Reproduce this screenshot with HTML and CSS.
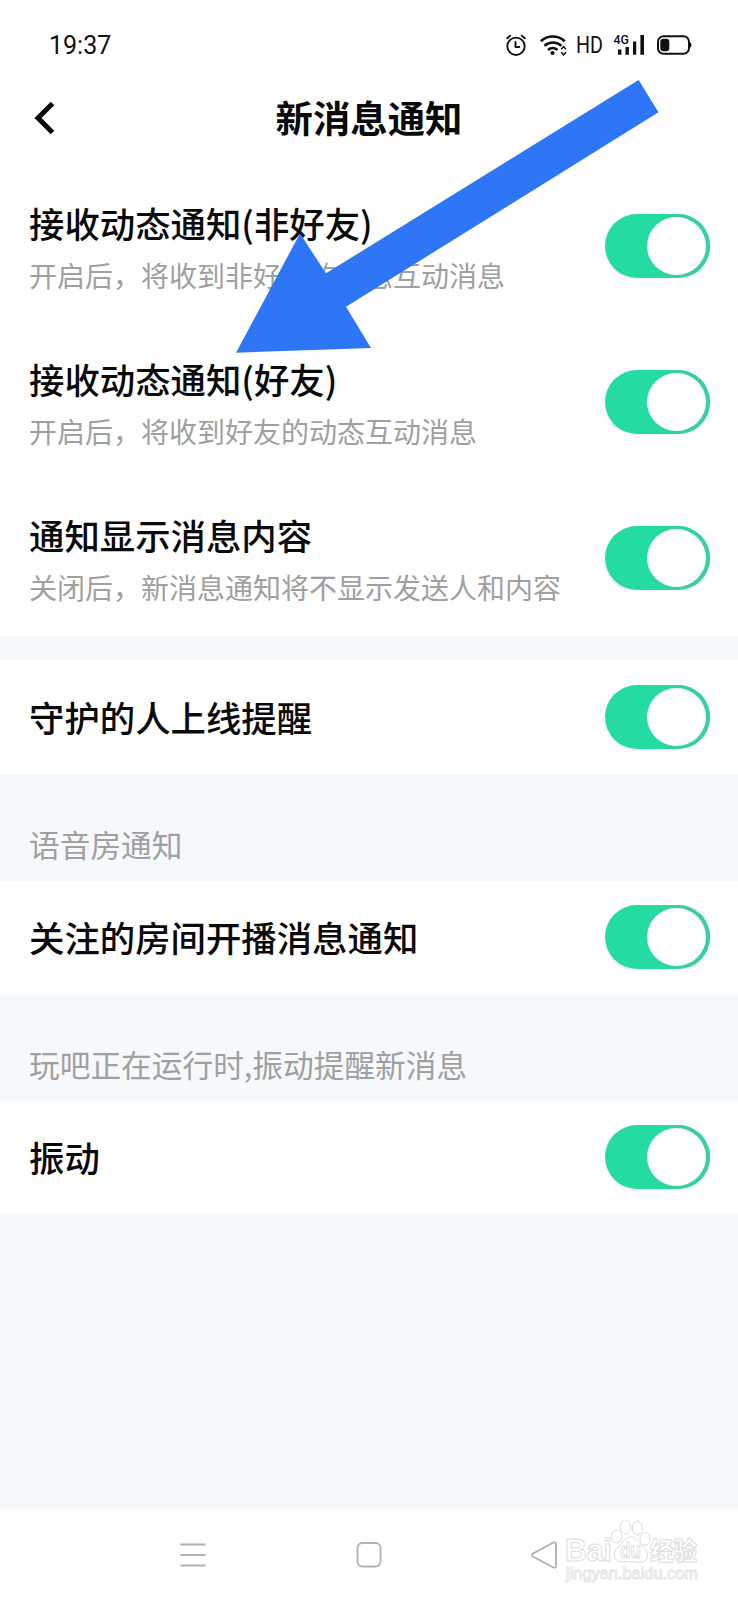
FILE: index.html
```html
<!DOCTYPE html>
<html lang="zh-CN">
<head>
    <meta charset="UTF-8">
    <meta name="viewport" content="width=device-width, initial-scale=1.0">
    <title>新消息通知</title>
    <link rel="stylesheet" href="styles.css">
</head>
<body>
    <div class="status-bar">
        <span class="time">19:37</span>
        <svg class="status-icons" width="190" height="26" viewBox="504 32 190 26">
            <!-- alarm -->
            <g fill="none" stroke="#111" stroke-width="1.9" stroke-linecap="round" stroke-linejoin="round">
                <circle cx="516" cy="46.3" r="8.7"/>
                <path d="M515.5 42v5h3.8M507.2 38.2l3-2.4M524.8 38.2l-3-2.4"/>
            </g>
            <!-- wifi -->
            <g fill="none" stroke="#111" stroke-width="2.5">
                <path d="M540.8 41.2c7-6.3 17-6.3 24 0M544.4 45.8c5-4.5 12-4.5 17 0M548 50c3-2.6 6.5-2.6 9.5 0"/>
            </g>
            <circle cx="552.5" cy="53" r="2.1" fill="#111"/>
            <path d="M561.2 49.2l2.4-2.6 2.4 2.6M561.2 52.2l2.4 2.6 2.4-2.6" fill="none" stroke="#111" stroke-width="1.5"/>
            <text class="hd" x="576" y="53.4" textLength="27" lengthAdjust="spacingAndGlyphs">HD</text>
            <!-- signal -->
            <text class="net" x="613.5" y="44.3" textLength="15.5" lengthAdjust="spacingAndGlyphs">4G</text>
            <path d="M618 49.5h3.4v5.3H618zM625.5 47h3.4v7.8h-3.4zM633 41.5h3.2v13.3H633zM640.4 35h3.6v19.8h-3.6z" fill="#111"/>
            <!-- battery -->
            <rect x="658" y="36.3" width="31" height="17.4" rx="5.5" fill="none" stroke="#111" stroke-width="2"/>
            <rect x="660.3" y="38.8" width="9" height="12.4" rx="3" fill="#111"/>
            <path d="M689.5 42q2 .5 2 3t-2 3z" fill="#111"/>
        </svg>
    </div>

    <div class="header">
        <svg class="back" width="22" height="34" viewBox="0 0 22 34">
            <path d="M19.500 2.500L5 17L19.500 31.500" fill="none" stroke="#0a0a0a" stroke-width="5"/>
        </svg>
        <h1>新消息通知</h1>
    </div>

    <div class="group">
        <div class="item tall">
            <div class="text">
                <p class="name">接收动态通知(非好友)</p>
                <p class="desc">开启后，将收到非好友的动态互动消息</p>
            </div>
            <div class="switch"><div class="knob"></div></div>
        </div>
        <div class="item tall">
            <div class="text">
                <p class="name">接收动态通知(好友)</p>
                <p class="desc">开启后，将收到好友的动态互动消息</p>
            </div>
            <div class="switch"><div class="knob"></div></div>
        </div>
        <div class="item tall">
            <div class="text">
                <p class="name">通知显示消息内容</p>
                <p class="desc">关闭后，新消息通知将不显示发送人和内容</p>
            </div>
            <div class="switch"><div class="knob"></div></div>
        </div>
    </div>

    <div class="group spaced">
        <div class="item">
            <p class="name">守护的人上线提醒</p>
            <div class="switch"><div class="knob"></div></div>
        </div>
    </div>

    <p class="section">语音房通知</p>
    <div class="group">
        <div class="item">
            <p class="name">关注的房间开播消息通知</p>
            <div class="switch"><div class="knob"></div></div>
        </div>
    </div>

    <p class="section">玩吧正在运行时,振动提醒新消息</p>
    <div class="group">
        <div class="item">
            <p class="name">振动</p>
            <div class="switch"><div class="knob"></div></div>
        </div>
    </div>

    <div class="nav">
        <svg width="28" height="30" viewBox="0 0 28 30">
            <path d="M1.500 4.500h25M1.500 15h25M1.500 25.500h25"/>
        </svg>
        <svg width="28" height="30" viewBox="0 0 28 30">
            <rect x="2.500" y="3" width="23" height="23.500" rx="5"/>
        </svg>
        <svg width="28" height="30" viewBox="0 0 28 30">
            <path d="M22.500 2.500L2 13.500q-2 1.500 0 3L22.500 27.500q2.500 .8 2.500-1.800V4.300q0-2.600-2.500-1.800z"/>
        </svg>
    </div>

    <!-- arrow over the list -->
    <svg class="arrow" width="430" height="280" viewBox="232 76 430 280">
        <path d="M236 352.700L300 233.500L326 273.300L638.600 80L658.500 112.300L346 306.700L371 348z" fill="#2e76f6"/>
    </svg>

    <svg class="watermark" width="146" height="76" viewBox="560 1516 146 76">
        <text class="logo" x="565" y="1561" textLength="47" lengthAdjust="spacingAndGlyphs">Bai</text>
        <g class="paw">
            <ellipse cx="616.500" cy="1536.500" rx="5.300" ry="6.300"/>
            <ellipse cx="625.500" cy="1527" rx="5.300" ry="6.800"/>
            <ellipse cx="637.500" cy="1528" rx="5.300" ry="6.800"/>
            <ellipse cx="645" cy="1539" rx="5" ry="6.300"/>
            <path d="M631 1537c-7 0-8 6-13 10-6 5-5 14 3 15 4 .5 6-.5 10-.5s7 1 11 .5c7-1 7-10 2-14-5-4-6-11-13-11z"/>
        </g>
        <text class="du" x="620" y="1558" textLength="21" lengthAdjust="spacingAndGlyphs">du</text>
        <text class="jy" x="650" y="1560" textLength="47" lengthAdjust="spacingAndGlyphs">经验</text>
        <text class="url" x="566" y="1579" textLength="132" lengthAdjust="spacingAndGlyphs">jingyan.baidu.com</text>
    </svg>
</body>
</html>
```
FILE: styles.css
```css
* {
    box-sizing: border-box;
}

body {
    position: relative;
    display: flex;
    flex-direction: column;
    height: 1600px;
    margin: 0;
    background-color: #f5f9fc;
    color: #0a0a0a;
    font-family: "Noto Sans CJK SC", sans-serif;
}

p, h1 {
    margin: 0;
}

.status-bar {
    display: flex;
    justify-content: space-between;
    align-items: center;
    height: 90px;
    padding: 0 44px 0 49px;
    background-color: #fff;
}

.time {
    font-family: Roboto, sans-serif;
    font-size: 25px;
    color: #111;
}

.hd {
    font: 23px Roboto, sans-serif;
    fill: #111;
}

.net {
    font: 500 13px Roboto, sans-serif;
    fill: #111;
}

.header {
    display: grid;
    grid-template-columns: 22px 1fr 22px;
    align-items: center;
    height: 78px;
    padding: 0 33px 23px;
    background-color: #fff;
}

.header h1 {
    font-size: 37.4px;
    font-weight: 700;
    line-height: 55px;
    text-align: center;
}

.group {
    background-color: #fff;
}

.group.spaced {
    margin-top: 24px;
}

.item {
    display: flex;
    justify-content: space-between;
    align-items: center;
    height: 113px;
    padding: 0 28px 1px 29px;
}

.item.tall {
    height: 156px;
    padding-bottom: 0;
}

.spaced .item {
    height: 114px;
    padding-bottom: 0;
}

.text {
    padding-top: 4px;
}

.name {
    font-size: 35.4px;
    font-weight: 500;
    line-height: 54px;
}

.desc {
    font-size: 28px;
    font-weight: 400;
    line-height: 50px;
    color: #a0a0a0;
}

/* Switch */
.switch {
    flex: none;
    width: 105px;
    height: 64px;
    padding: 3px 4px 3px 42px;
    border-radius: 32px;
    background-color: #24dba2;
    overflow: hidden;
}

.knob {
    width: 59px;
    height: 58px;
    border-radius: 50%;
    background-color: #fff;
    box-shadow: 3px 0 0 3px #39d09f;
}

.section {
    height: 107px;
    padding: 45px 29px 0;
    font-size: 30.7px;
    font-weight: 400;
    line-height: 50px;
    color: #a0a0a0;
}

/* Bottom navigation */
.nav {
    display: grid;
    grid-template-columns: repeat(3, 176px);
    justify-content: center;
    place-items: center;
    height: 90px;
    margin-top: auto;
    background-color: #fff;
}

.nav svg {
    fill: none;
    stroke: #b0b0b0;
    stroke-width: 1.8;
}

.arrow {
    position: absolute;
    left: 232px;
    top: 76px;
}

.watermark {
    position: absolute;
    left: 560px;
    top: 1516px;
    fill: #fff;
    stroke: #dcdcdc;
    stroke-width: 1;
}

.logo {
    font: 700 32px "Liberation Sans", sans-serif;
}

.du {
    font: 700 22px "Liberation Sans", sans-serif;
}

.jy {
    font: 900 25px "Noto Sans CJK SC", sans-serif;
}

.url {
    font: 16px "Liberation Sans", sans-serif;
    stroke: #e6e6e6;
}
```
